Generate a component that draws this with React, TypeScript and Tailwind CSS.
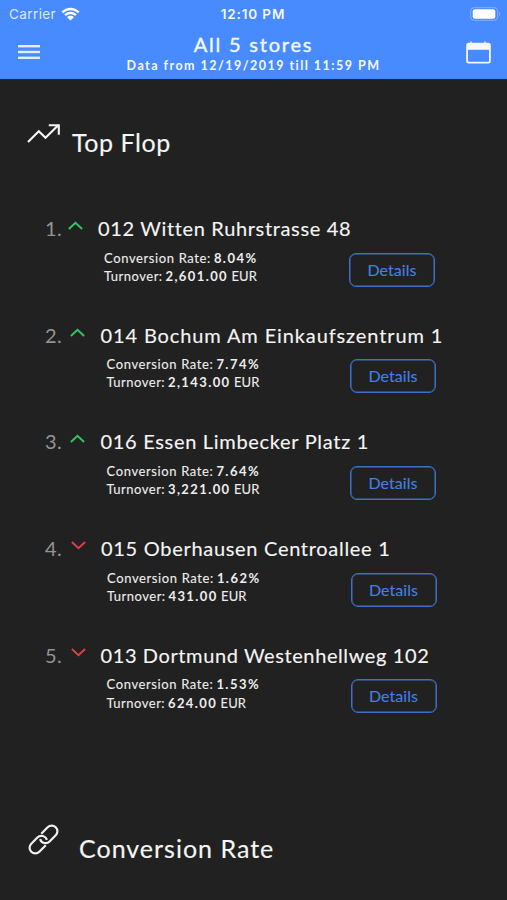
type Store = {
  rank: string;
  up: boolean;
  name: string;
  nameClass: string;
  markClass: string;
  infoClass: string;
  buttonClass: string;
  rate: string;
  turnover: string;
};

const stores: Store[] = [
  { rank: '1.', up: true, name: '012 Witten Ruhrstrasse 48', nameClass: 'tracking-[0.65px]', markClass: 'w-[30.5px] ml-[22.5px]', infoClass: 'pl-[104px]', buttonClass: 'mr-[72px]', rate: '8.04%', turnover: '2,601.00' },
  { rank: '2.', up: true, name: '014 Bochum Am Einkaufszentrum 1', nameClass: 'tracking-[0.88px]', markClass: 'w-[30.5px] ml-[25px]', infoClass: 'pl-[106.5px]', buttonClass: 'mr-[71px]', rate: '7.74%', turnover: '2,143.00' },
  { rank: '3.', up: true, name: '016 Essen Limbecker Platz 1', nameClass: 'tracking-[0.69px]', markClass: 'w-[30.5px] ml-[25px]', infoClass: 'pl-[106.5px]', buttonClass: 'mr-[71px]', rate: '7.64%', turnover: '3,221.00' },
  { rank: '4.', up: false, name: '015 Oberhausen Centroallee 1', nameClass: 'tracking-[0.7px]', markClass: 'w-[30px] ml-[26px]', infoClass: 'pl-[107px]', buttonClass: 'mr-[70.5px]', rate: '1.62%', turnover: '431.00' },
  { rank: '5.', up: false, name: '013 Dortmund Westenhellweg 102', nameClass: 'tracking-[0.6px]', markClass: 'w-[29.5px] ml-[26px]', infoClass: 'pl-[106.5px]', buttonClass: 'mr-[70.5px]', rate: '1.53%', turnover: '624.00' },
];

function Chevron({ up }: { up: boolean }) {
  return (
    <svg width="15" height="9" viewBox="0 0 15 9" fill="none" stroke={up ? '#35c45e' : '#dd3f42'} strokeWidth="2">
      <path d={up ? 'M0.9 8L7.5 1.8L14.1 8' : 'M0.9 1L7.5 7.2L14.1 1'} />
    </svg>
  );
}

function StoreRow({ store }: { store: Store }) {
  return (
    <li className="h-[106.7px]">
      <div className="flex h-6 pl-[45px] text-[20px] leading-6 whitespace-nowrap">
        <span className="w-0 tracking-[0.3px] text-[#949494]">{store.rank}</span>
        <span className={`shrink-0 pt-[5px] ${store.markClass}`}>
          <Chevron up={store.up} />
        </span>
        <h2 className={`[-webkit-text-stroke:0.12px] ${store.nameClass}`}>{store.name}</h2>
      </div>
      <div className={`flex justify-between pt-2 ${store.infoClass}`}>
        <div className="pt-[0.5px] text-[13px] leading-[18.3px] whitespace-nowrap text-[#eeeeee] [-webkit-text-stroke:0.1px]">
          <p className="tracking-[0.62px]">
            Conversion Rate: <b className="-ml-px tracking-[1.45px] [-webkit-text-stroke:0px]">{store.rate}</b>
          </p>
          <p className="tracking-[0.5px]">
            Turnover: <b className="-ml-px tracking-[1.4px] [-webkit-text-stroke:0px]">{store.turnover}</b>
            <span className="tracking-[0.1px]"> EUR</span>
          </p>
        </div>
        <button
          className={`mt-[4.5px] h-[34px] w-[86px] rounded-[7px] border border-[#3e70c8] text-[16px] leading-[30px] tracking-[0.05px] text-[#4580e4] [-webkit-text-stroke:0.1px] shadow-[inset_0_0_0_0.5px_#3e70c8] ${store.buttonClass}`}
        >
          Details
        </button>
      </div>
    </li>
  );
}

export default function App() {
  return (
    <div className="h-[900px] w-[507px] overflow-hidden bg-[#212121] font-['Lato','Liberation_Sans',sans-serif] text-[#f5f5f5]">
      <header className="h-[79px] bg-[#488aff] text-[#f4f8ff]">
        <div className="grid h-7 grid-cols-3 items-center pr-[6px] pl-[9px] font-['Inter','Liberation_Sans',sans-serif] text-[13.5px] leading-7">
          <div className="flex items-center gap-[5px] text-[#dce8ff]">
            <span className="tracking-[0.4px]">Carrier</span>
            <svg width="19" height="14" viewBox="0 0 19 14" fill="#ffffff">
              <path d="M0.5 4.6C5.6-.5 13.4-.5 18.5 4.6L16.8 6.3C12.7 2.3 6.3 2.3 2.2 6.3Z" />
              <path d="M3.3 7.4C6.8 4 12.2 4 15.7 7.4L14 9.1C11.4 6.7 7.6 6.7 5 9.1Z" />
              <path d="M6.1 10.2C8 8.4 11 8.4 12.9 10.2L9.5 13.6Z" />
            </svg>
          </div>
          <span className="-ml-2 text-center font-semibold tracking-[0.85px] whitespace-nowrap -mr-1">12:10 PM</span>
          <svg className="justify-self-end" width="31" height="14" viewBox="0 0 31 14">
            <rect x="0.6" y="0.6" width="27" height="12.8" rx="3.8" fill="none" stroke="#78a9ff" strokeWidth="1.2" />
            <rect x="2.7" y="2.3" width="22.6" height="9.4" rx="2.3" fill="#ffffff" />
            <path d="M29 4.5Q31.4 7 29 9.5Z" fill="#78a9ff" />
          </svg>
        </div>
        <div className="flex justify-between pr-[16px] pl-[18px]">
          <svg className="mt-[17px]" width="22" height="15" viewBox="0 0 22 15" fill="#e2edff">
            <rect y="0" width="22" height="2.4" />
            <rect y="5.8" width="22" height="2.4" />
            <rect y="11.6" width="22" height="2.4" />
          </svg>
          <div className="pl-px text-center whitespace-nowrap">
            <h1 className="pt-[3.5px] text-[20px] leading-6 tracking-[1.8px] [-webkit-text-stroke:0.4px]">All 5 stores</h1>
            <p className="pt-[1.5px] text-[12.5px] leading-[18px] font-bold tracking-[1.47px]">Data from 12/19/2019 till 11:59 PM</p>
          </div>
          <svg className="mt-[13px]" width="25" height="23" viewBox="0 0 25 23">
            <path d="M5 0.5V3M19 0.5V3" stroke="#f4f8ff" strokeWidth="1.5" />
            <rect x="1.1" y="2.6" width="22.8" height="19" rx="1.6" fill="none" stroke="#f4f8ff" strokeWidth="1.8" />
            <path d="M1 2.5H24V8.8H1Z" fill="#f4f8ff" />
          </svg>
        </div>
      </header>

      <section className="h-[137px] pt-[45px] pl-[27px]">
        <div className="flex">
          <svg width="34" height="20" viewBox="0 0 34 20" fill="none" stroke="#f5f5f5" strokeWidth="2.1">
            <path d="M1 18L11.8 7.2L18.5 13.8L31 1.6M21.8 1.2H31.8V10.8" />
          </svg>
          <h2 className="pt-[3px] pl-[11px] text-[25px] leading-[30px] tracking-[0.55px] [-webkit-text-stroke:0.15px]">Top Flop</h2>
        </div>
      </section>

      <ul className="h-[606px]">
        {stores.map((store) => (
          <StoreRow key={store.rank} store={store} />
        ))}
      </ul>

      <section className="flex pl-[28px]">
        <svg className="mt-[2px]" width="31" height="31" viewBox="0 0 31 31" fill="none" stroke="#f0f0f0" strokeWidth="2.2">
          <g transform="rotate(-45 15.5 15.5)">
            <path d="M13 21.2H3.9A5.7 5.7 0 0 1 3.9 9.8H12.6A5.7 5.7 0 0 1 17.6 18.2" />
            <path d="M18 9.8H27.1A5.7 5.7 0 0 1 27.1 21.2H18.4A5.7 5.7 0 0 1 13.4 12.8" />
          </g>
        </svg>
        <h2 className="pt-[10.5px] pl-[20px] text-[25px] leading-[30px] tracking-[1px] [-webkit-text-stroke:0.15px]">Conversion Rate</h2>
      </section>
    </div>
  );
}
